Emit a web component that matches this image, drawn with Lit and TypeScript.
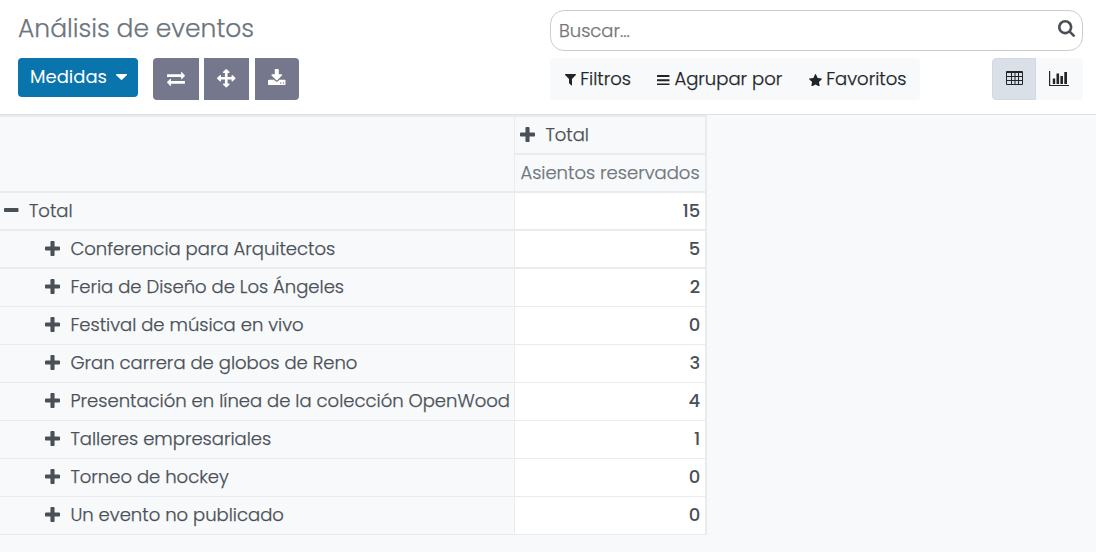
import { LitElement, html, css, svg } from "lit";
import { customElement } from "lit/decorators.js";

const ICONS: Record<string, { box: string; d: string }> = {
  plus: {
    box: "192 128 1408 1408",
    d: "M1600 736v192q0 40-28 68t-68 28h-416v416q0 40-28 68t-68 28h-192q-40 0-68-28t-28-68v-416h-416q-40 0-68-28t-28-68v-192q0-40 28-68t68-28h416v-416q0-40 28-68t68-28h192q40 0 68 28t28 68v416h416q40 0 68 28t28 68z",
  },
  minus: {
    box: "192 640 1408 384",
    d: "M1600 736v192q0 40-28 68t-68 28h-1216q-40 0-68-28t-28-68v-192q0-40 28-68t68-28h1216q40 0 68 28t28 68z",
  },
  exchange: {
    box: "0 288 1792 1344",
    d: "M1792 1184v192q0 13-9.5 22.5t-22.5 9.5h-1376v192q0 13-9.5 22.5t-22.5 9.5q-12 0-24-10l-319-320q-9-9-9-22 0-14 9-23l320-320q9-9 23-9 13 0 22.5 9.5t9.5 22.5v192h1376q13 0 22.5 9.5t9.5 22.5zm0-544q0 14-9 23l-320 320q-9 9-23 9-13 0-22.5-9.5t-9.5-22.5v-192h-1376q-13 0-22.5-9.5t-9.5-22.5v-192q0-13 9.5-22.5t22.5-9.5h1376v-192q0-14 9-23t23-9q12 0 24 10l319 319q9 9 9 23z",
  },
  arrows: {
    box: "0 0 1792 1792",
    d: "M1792 896q0 26-19 45l-256 256q-19 19-45 19t-45-19-19-45v-128h-384v384h128q26 0 45 19t19 45-19 45l-256 256q-19 19-45 19t-45-19l-256-256q-19-19-19-45t19-45 45-19h128v-384h-384v128q0 26-19 45t-45 19-45-19l-256-256q-19-19-19-45t19-45l256-256q19-19 45-19t45 19 19 45v128h384v-384h-128q-26 0-45-19t-19-45 19-45l256-256q19-19 45-19t45 19l256 256q19 19 19 45t-19 45-45 19h-128v384h384v-128q0-26 19-45t45-19 45 19l256 256q19 19 19 45z",
  },
  download: {
    box: "64 0 1664 1536",
    d: "M1344 1344q0-26-19-45t-45-19-45 19-19 45 19 45 45 19 45-19 19-45zm256 0q0-26-19-45t-45-19-45 19-19 45 19 45 45 19 45-19 19-45zm128-224v320q0 40-28 68t-68 28h-1472q-40 0-68-28t-28-68v-320q0-40 28-68t68-28h465l135 136q58 56 136 56t136-56l136-136h464q40 0 68 28t28 68zm-325-569q17 41-14 70l-448 448q-18 19-45 19t-45-19l-448-448q-31-29-14-70 17-39 59-39h256v-448q0-26 19-45t45-19h256q26 0 45 19t19 45v448h256q42 0 59 39z",
  },
  caret: {
    box: "384 640 1024 576",
    d: "M1408 704q0 26-19 45l-448 448q-19 19-45 19t-45-19l-448-448q-19-19-19-45t19-45 45-19h896q26 0 45 19t19 45z",
  },
  filter: {
    box: "191 256 1410 1408",
    d: "M1595 295q17 41-14 70l-493 493v742q0 42-39 59-13 5-25 5-27 0-45-19l-256-256q-19-19-19-45v-486l-493-493q-31-29-14-70 17-39 59-39h1280q42 0 59 39z",
  },
  bars: {
    box: "128 256 1536 1280",
    d: "M1664 1344v128q0 26-19 45t-45 19h-1408q-26 0-45-19t-19-45v-128q0-26 19-45t45-19h1408q26 0 45 19t19 45zm0-512v128q0 26-19 45t-45 19h-1408q-26 0-45-19t-19-45v-128q0-26 19-45t45-19h1408q26 0 45 19t19 45zm0-512v128q0 26-19 45t-45 19h-1408q-26 0-45-19t-19-45v-128q0-26 19-45t45-19h1408q26 0 45 19t19 45z",
  },
  star: {
    box: "64 32 1664 1588",
    d: "M1728 647q0 22-26 48l-363 354 86 500q1 7 1 20 0 21-10.5 35.5t-30.5 14.5q-19 0-40-12l-449-236-449 236q-22 12-40 12-21 0-31.5-14.5t-10.5-35.5q0-6 2-20l86-500-364-354q-25-27-25-48 0-37 56-46l502-73 225-455q19-41 49-41t49 41l225 455 502 73q56 9 56 46z",
  },
  search: {
    box: "64 128 1664 1664",
    d: "M1216 832q0-185-131.5-316.5t-316.5-131.5-316.5 131.5-131.5 316.5 131.5 316.5 316.5 131.5 316.5-131.5 131.5-316.5zm512 832q0 52-38 90t-90 38q-54 0-90-38l-343-342q-179 124-399 124-143 0-273.5-55.5t-225-150-150-225-55.5-273.5 55.5-273.5 150-225 225-150 273.5-55.5 273.5 55.5 225 150 150 225 55.5 273.5q0 220-124 399l343 343q37 37 37 90z",
  },
  table: {
    box: "0 0 17 14",
    d: "M1 0h15a1 1 0 0 1 1 1v12a1 1 0 0 1-1 1h-15a1 1 0 0 1-1-1v-12a1 1 0 0 1 1-1zM1 2v3h4v-3zM6 2v3h2.500v-3zM9.500 2v3h2.500v-3zM13 2v3h3v-3zM1 6v3h4v-3zM6 6v3h2.500v-3zM9.500 6v3h2.500v-3zM13 6v3h3v-3zM1 10v3h4v-3zM6 10v3h2.500v-3zM9.500 10v3h2.500v-3zM13 10v3h3v-3z",
  },
  chart: {
    box: "0 0 20 15",
    d: "M0 0h1.200v13.900h18.800v1.100H0zM3.800 7.500h2.400v5.500H3.800zM7.500 2.500h2.600v10.500H7.500zM11.400 5h2.600v8h-2.600zM15.300 1h2.700v12h-2.700z",
  },
};

const icon = (name: string, w: number, h: number) => html`
  <svg class="icon" width=${w} height=${h} viewBox=${ICONS[name].box} preserveAspectRatio="none" aria-hidden="true">
    ${svg`<path fill="currentColor" fill-rule="evenodd" d=${ICONS[name].d}></path>`}
  </svg>`;

const ROWS: [string, number][] = [
  ["Conferencia para Arquitectos", 5],
  ["Feria de Diseño de Los Ángeles", 2],
  ["Festival de música en vivo", 0],
  ["Gran carrera de globos de Reno", 3],
  ["Presentación en línea de la colección OpenWood", 4],
  ["Talleres empresariales", 1],
  ["Torneo de hockey", 0],
  ["Un evento no publicado", 0],
];

@customElement("control-panel")
export class ControlPanel extends LitElement {
  static styles = css`
    :host { display: block; box-sizing: border-box; height: 115px; background: #fff; border-bottom: 1px solid #dee2e6; padding: 10px 13px 0 18px; }
    .bar { display: flex; justify-content: space-between; }
    .icon { display: block; flex: none; }
    .title { color: #6c757d; font-size: 25px; line-height: 37px; height: 48px; white-space: nowrap; }
    .buttons { display: flex; align-items: flex-start; }
    .measures { display: flex; align-items: flex-start; box-sizing: border-box; width: 120px; height: 39px; padding: 5px 0 0 12px; gap: 9px; margin-right: 15px; border-radius: 4px; background: #0a74ad; color: #fff; font-weight: 400; -webkit-text-stroke: 0; }
    .measures .icon { margin-top: 11px; }
    .tools { display: flex; }
    .tool { display: flex; justify-content: center; box-sizing: border-box; height: 42px; background: #75788d; color: #fff; }
    .tool.swap { width: 46px; margin-right: 5px; padding-top: 14px; border-radius: 4px 0 0 4px; }
    .tool.expand { width: 45px; margin-right: 6px; padding-top: 11px; }
    .tool.save { width: 44px; padding-top: 11px; border-radius: 0 4px 4px 0; }
    .right { width: 533px; }
    .search { display: flex; justify-content: space-between; box-sizing: border-box; height: 41px; border: 1px solid #ccc; border-radius: 14px; padding: 0 7px 0 8px; color: #757575; line-height: 40px; }
    .glass { color: #495057; padding-top: 9px; }
    .options { display: flex; justify-content: space-between; margin-top: 7px; color: #212529; }
    .filters { display: flex; align-items: flex-start; box-sizing: border-box; width: 370px; height: 42px; padding: 7px 0 0 14.5px; background: #f8f9fb; border-radius: 4px; white-space: nowrap; }
    .filter { display: flex; align-items: center; gap: 4.7px; margin-right: 26.3px; }
    .filter .icon { margin-top: 3px; }
    .views { display: flex; }
    .view { box-sizing: border-box; height: 42px; background: #f8f9fb; }
    .view.pivot { width: 44px; padding: 12px 0 0 13px; background: #dae0e7; border: 1px solid #d3d9e2; border-radius: 4px 0 0 4px; }
    .view.graph { width: 47px; padding: 13px 0 0 13px; border-radius: 0 4px 4px 0; }
  `;
  render() {
    return html`
      <div class="bar">
        <div>
          <div class="title">Análisis de eventos</div>
          <div class="buttons">
            <div class="measures"><span>Medidas</span>${icon("caret", 11, 6)}</div>
            <div class="tools">
              <div class="tool swap">${icon("exchange", 18, 14)}</div>
              <div class="tool expand">${icon("arrows", 18.5, 18.5)}</div>
              <div class="tool save">${icon("download", 17.5, 16)}</div>
            </div>
          </div>
        </div>
        <div class="right">
          <div class="search"><span>Buscar...</span><span class="glass">${icon("search", 17, 17)}</span></div>
          <div class="options">
            <div class="filters">
              <div class="filter">${icon("filter", 11, 11.5)}<span>Filtros</span></div>
              <div class="filter">${icon("bars", 12.5, 10.5)}<span>Agrupar por</span></div>
              <div class="filter">${icon("star", 13, 12.5)}<span>Favoritos</span></div>
            </div>
            <div class="views">
              <div class="view pivot">${icon("table", 17, 14)}</div>
              <div class="view graph">${icon("chart", 20, 15)}</div>
            </div>
          </div>
        </div>
      </div>`;
  }
}

@customElement("pivot-table")
export class PivotTable extends LitElement {
  static styles = css`
    :host { display: block; width: 707px; color: #495057; }
    .table { display: grid; grid-template-columns: 514px 193px; box-sizing: border-box; border-top: 2px solid #e9ecef; }
    .cell { display: flex; align-items: flex-start; box-sizing: border-box; height: 38px; padding-top: 4px; border-bottom: 1px solid #e9ecef; white-space: nowrap; }
    .cell.thick { border-bottom-width: 2px; }
    .cell.corner { grid-row: span 2; height: 76px; }
    .icon { display: block; flex: none; margin-top: 5.5px; }
    .value-side { border-left: 1px solid #e9ecef; border-right: 2px solid #e9ecef; padding-left: 5.4px; padding-right: 4.8px; }
    .head { gap: 10px; }
    .measure { color: #6c757d; }
    .root { padding-left: 4px; gap: 10.5px; }
    .root .icon { margin-top: 11px; }
    .group { padding-left: 45px; gap: 10.4px; }
    .value { justify-content: flex-end; background: #fff; font-weight: 500; -webkit-text-stroke: 0; }
  `;
  render() {
    return html`
      <div class="table">
        <div class="cell thick corner"></div>
        <div class="cell thick value-side head">${icon("plus", 15, 15)}<span>Total</span></div>
        <div class="cell thick value-side measure">Asientos reservados</div>
        <div class="cell thick root">${icon("minus", 14.5, 4)}<span>Total</span></div>
        <div class="cell thick value-side value">15</div>
        ${ROWS.map(([name, seats], i) => html`
          <div class="cell group ${i === 0 ? "thick" : ""}">${icon("plus", 15, 15)}<span>${name}</span></div>
          <div class="cell value-side value ${i === 0 ? "thick" : ""}">${seats}</div>`)}
      </div>`;
  }
}

@customElement("app-root")
export class AppRoot extends LitElement {
  static styles = css`
    :host { display: block; height: 552px; overflow: hidden; background: #f8f9fb; font: 300 18px/27px Poppins, Inter, "Open Sans", sans-serif; -webkit-text-stroke: 0.25px; }
  `;
  render() {
    return html`<control-panel></control-panel><pivot-table></pivot-table>`;
  }
}
